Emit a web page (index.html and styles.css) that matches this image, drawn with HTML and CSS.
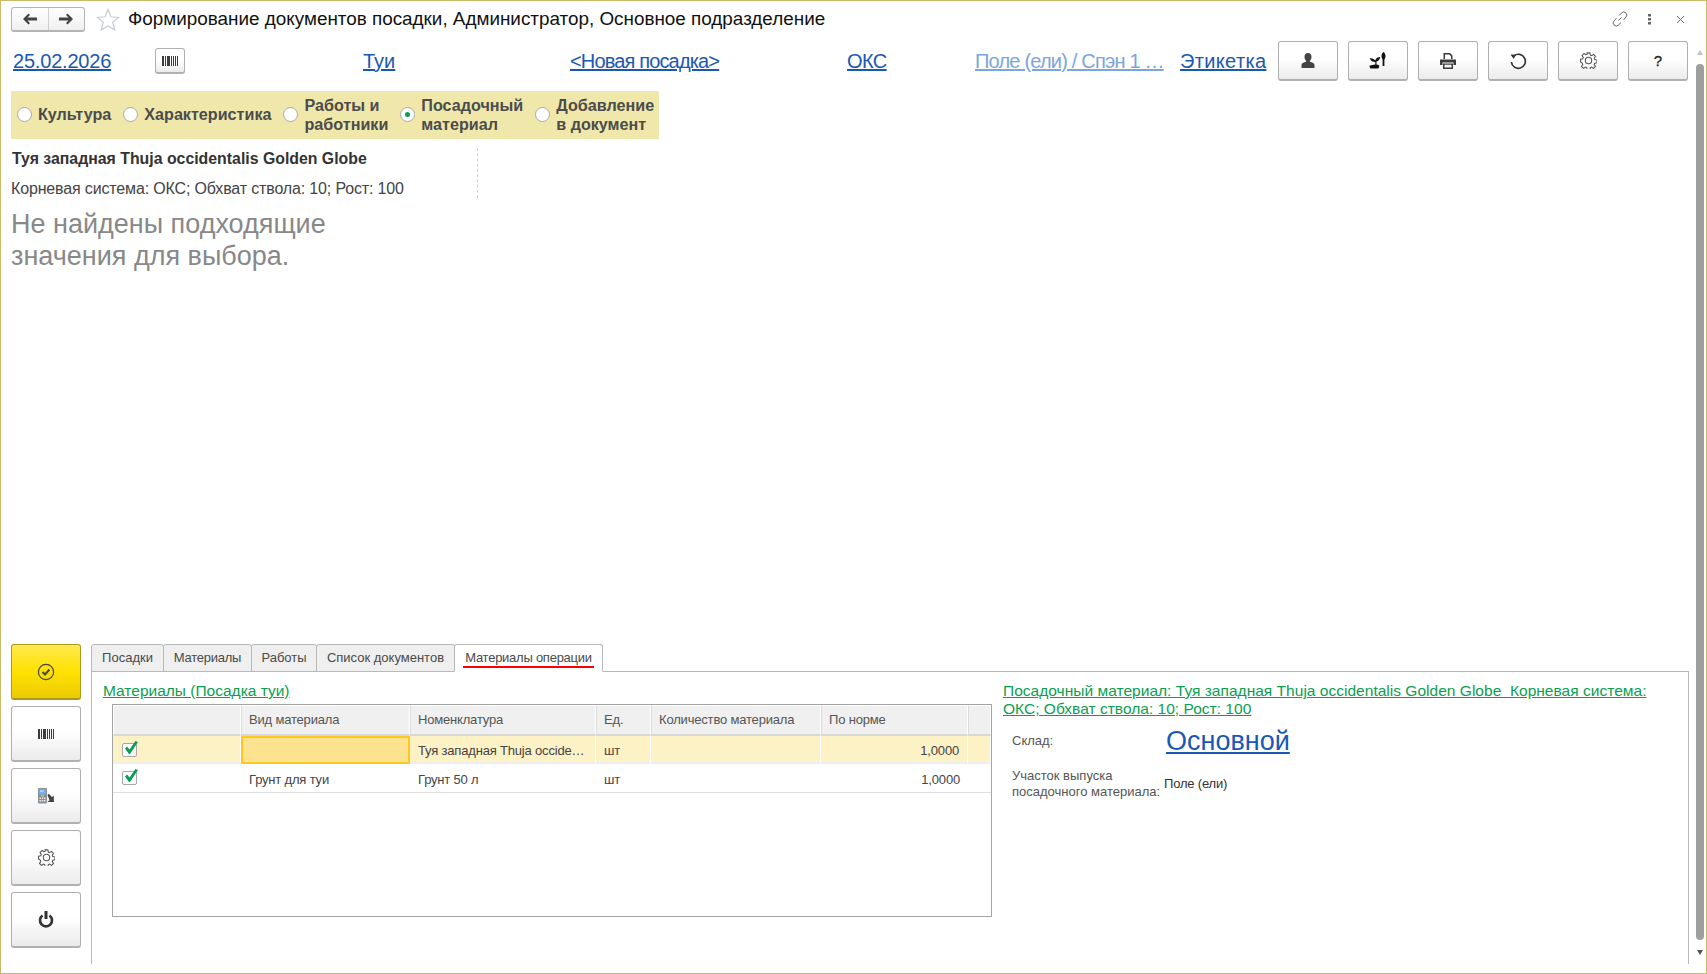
FILE: index.html
```html
<!DOCTYPE html>
<html lang="ru">
<head>
<meta charset="utf-8">
<title>Формирование документов посадки</title>
<link rel="stylesheet" href="styles.css">
</head>
<body>
<svg class="sprite" aria-hidden="true">
  <symbol id="gear" viewBox="0 0 16 16">
    <path fill="none" stroke="currentColor" stroke-width="1" d="M6.700.8h2.600l.4 2.100 1.200.5 1.800-1.200 1.900 1.900-1.200 1.800.5 1.200 2.100.4v2.600l-2.100.4-.5 1.200 1.200 1.800-1.900 1.900-1.800-1.200-1.200.5-.4 2.100H6.700l-.4-2.100-1.200-.5-1.800 1.200-1.900-1.900 1.200-1.800-.5-1.200L.5 9.300V6.700l2.100-.4.5-1.200-1.200-1.800 1.900-1.900 1.800 1.200 1.200-.5z"/>
    <circle cx="8" cy="8" r="3" fill="none" stroke="currentColor" stroke-width="1"/>
  </symbol>
  <symbol id="barcode" viewBox="0 0 16 10">
    <path fill="currentColor" d="M0 0h2v10H0zM3 0h1v10H3zM5 0h3v10H5zM9 0h1v10H9zM11 0h1v10h-1zM13 0h1v10h-1zM15 0h1v10h-1z"/>
  </symbol>
  <symbol id="check" viewBox="0 0 16 16">
    <rect x=".5" y="2.500" width="14" height="13" rx="1.500" fill="#fff" stroke="#a8a8a8"/>
    <path fill="#0d9c55" d="M3 7.500l2-2 2.600 3L13.400 0 16 1 8 13H7z"/>
  </symbol>
</svg>

<div class="window">
  <header class="titlebar">
    <div class="nav">
      <button class="nav-btn" type="button" aria-label="Назад">
        <svg width="16" height="12" viewBox="0 0 16 12"><path fill="#444" d="M6.500.5 8 2 5.500 4.500H15v3H5.500L8 10l-1.500 1.500L1 6z"/></svg>
      </button>
      <button class="nav-btn" type="button" aria-label="Вперёд">
        <svg width="16" height="12" viewBox="0 0 16 12"><path fill="#444" d="M9.500.5 8 2l2.500 2.500H1v3h9.500L8 10l1.500 1.500L15 6z"/></svg>
      </button>
    </div>
    <svg class="star" width="24" height="23" viewBox="0 0 24 23"><path fill="#fff" stroke="#c5ccd6" stroke-width="1.200" d="M12 1.500l3 7.300 7.700.6-5.900 5 1.900 7.600L12 17.900 5.300 22l1.900-7.600-5.900-5 7.700-.6z"/></svg>
    <h1 class="title">Формирование документов посадки, Администратор, Основное подразделение</h1>
    <div class="win-tools">
      <svg width="16" height="16" viewBox="0 0 16 16"><g fill="none" stroke="#666" stroke-width="1"><path d="M6.500 9.500l3-3M7 4.500l2.600-2.600a3 3 0 0 1 4.300 4.300L11.500 8.800M9 11.500l-2.600 2.600a3 3 0 0 1-4.300-4.300L4.500 7.200"/></g></svg>
      <svg width="4" height="11" viewBox="0 0 4 11"><path fill="#666" d="M0 0h3v2.500H0zM0 4h3v2.500H0zM0 8h3v2.500H0z"/></svg>
      <svg width="9" height="9" viewBox="0 0 9 9"><path fill="none" stroke="#666" stroke-width="1" d="M1 1l7 7M8 1L1 8"/></svg>
    </div>
  </header>

  <div class="toprow">
    <a class="link ls-date" href="#">25.02.2026</a>
    <button class="btn btn-small" type="button" aria-label="Штрихкод"><svg class="ic" width="16" height="10"><use href="#barcode"/></svg></button>
    <a class="link" href="#">Туи</a>
    <a class="link ls-new" href="#">&lt;Новая посадка&gt;</a>
    <a class="link ls-oks" href="#">ОКС</a>
    <a class="link link-pale" href="#">Поле (ели) / Спэн 1 …</a>
    <a class="link ls-label" href="#">Этикетка</a>
    <div class="tools">
      <button class="btn btn-tool" type="button" aria-label="Работник">
        <svg width="14" height="15" viewBox="0 0 14 15"><path fill="#444" d="M7 0c2.200 0 3.500 1.700 3.500 3.900 0 1.600-.7 3-1.600 3.800v1.100c2.300.6 4.600 1.500 4.600 3.300V15H.5v-2.900c0-1.800 2.300-2.700 4.600-3.300V7.700C4.200 6.900 3.500 5.500 3.500 3.900 3.500 1.700 4.800 0 7 0z"/></svg>
      </button>
      <button class="btn btn-tool" type="button" aria-label="Посадка">
        <svg width="18" height="17" viewBox="0 0 18 17"><path fill="#111" d="M14.500 0c1.300 1 2 2.500 2 4.200 0 1.500-.7 2.700-1.100 3.200V14h-1.800V7.400c-.4-.5-1.100-1.700-1.100-3.200 0-1.700.7-3.200 2-4.200zM6.300 12.500V10C4 9.900 1.400 9 .8 6.200 3.300 6 5.400 6.900 6.300 8.600c.5-2.100 2.200-3.500 4.900-3.500-.3 2.600-1.900 4.100-3.700 4.400v3c.8.100 1.800.5 2.700 1v1.200l-.9 1.800H1.500L.5 14.700v-1c1.600-.6 3.600-1.100 5.800-1.200z"/></svg>
      </button>
      <button class="btn btn-tool" type="button" aria-label="Печать">
        <svg width="16" height="16" viewBox="0 0 16 16"><path fill="#3c3c3c" d="M3.500 0H10l2.500 2.500V6H11V3.300L9.300 1.500H5V6H3.500zM0 6.500h16V12h-2.500V9.500h-11V12H0zM13 7.500h1.500v1H13zM3 10.500h10V16H3zm1.500 1.300v2.700h7v-2.700z"/></svg>
      </button>
      <button class="btn btn-tool" type="button" aria-label="Обновить">
        <svg width="18" height="18" viewBox="0 0 18 18"><path fill="none" stroke="#333" stroke-width="1.700" d="M5 3.800A7 7 0 1 1 2.400 10"/><path fill="#333" d="M1.500 2.500l5.500.2-2.300 4.300z"/></svg>
      </button>
      <button class="btn btn-tool" type="button" aria-label="Настройки"><svg class="ic-gear" width="17" height="17"><use href="#gear"/></svg></button>
      <button class="btn btn-tool btn-help" type="button">?</button>
    </div>
  </div>

  <div class="steps">
    <label class="step"><span class="radio"></span><span class="step-text">Культура</span></label>
    <label class="step"><span class="radio"></span><span class="step-text">Характеристика</span></label>
    <label class="step"><span class="radio"></span><span class="step-text">Работы и<br>работники</span></label>
    <label class="step"><span class="radio radio-on"></span><span class="step-text">Посадочный<br>материал</span></label>
    <label class="step"><span class="radio"></span><span class="step-text">Добавление<br>в документ</span></label>
  </div>

  <main class="choice">
    <div class="choice-info">
      <div class="choice-name">Туя западная Thuja occidentalis Golden Globe</div>
      <div class="choice-props">Корневая система: ОКС; Обхват ствола: 10; Рост: 100</div>
    </div>
    <p class="choice-empty">Не найдены подходящие<br>значения для выбора.</p>
  </main>

  <section class="bottom">
    <aside class="side">
      <button class="btn btn-side btn-yellow" type="button" aria-label="Готово">
        <svg width="18" height="18" viewBox="0 0 18 18"><circle cx="9" cy="9" r="7.600" fill="none" stroke="#444" stroke-width="1.200"/><path fill="none" stroke="#444" stroke-width="2" d="M5.500 9l2.500 2.500 4.500-5"/></svg>
      </button>
      <button class="btn btn-side" type="button" aria-label="Штрихкод"><svg class="ic" width="16" height="10"><use href="#barcode"/></svg></button>
      <button class="btn btn-side" type="button" aria-label="Терминал">
        <svg width="17" height="16" viewBox="0 0 17 16"><rect x="0" y="0" width="9" height="15.500" rx="1" fill="#8a9097"/><rect x="1.200" y="1.200" width="6.600" height="5.300" fill="#6bb6ee"/><rect x="2" y="2.500" width="3.500" height="1" fill="#d8effc"/><rect x="3" y="7" width="3" height="1.500" fill="#f2c100"/><path fill="#e6e6e6" d="M1.500 9.500H3V11H1.500zM3.800 9.500h1.500V11H3.800zM6 9.500h1.500V11H6zM1.500 12H3v1.500H1.500zM3.800 12h1.500v1.500H3.800zM6 12h1.500v1.500H6z"/><path fill="#444" d="M9.500 7l1.200-1.200 3.300 3.300 1.700-1.700.3 6.600H9.500l2-1.700z"/></svg>
      </button>
      <button class="btn btn-side" type="button" aria-label="Настройки"><svg class="ic-gear" width="17" height="17"><use href="#gear"/></svg></button>
      <button class="btn btn-side" type="button" aria-label="Выключить">
        <svg width="16" height="17" viewBox="0 0 16 17"><path fill="none" stroke="#333" stroke-width="2.600" d="M4.500 4.500a6 6 0 1 0 7 0"/><path fill="#333" d="M6.500 0h3v8h-3z"/></svg>
      </button>
    </aside>

    <div class="tabbox">
      <nav class="tabs">
        <span class="tab tab-1">Посадки</span>
        <span class="tab tab-2 tab-tight">Материалы</span>
        <span class="tab tab-3">Работы</span>
        <span class="tab tab-4">Список документов</span>
        <span class="tab tab-5 tab-active tab-tight"><span class="tab-mark">Материалы операции</span></span>
      </nav>
      <div class="panel">
        <div class="panel-left">
          <a class="green" href="#">Материалы (Посадка туи)</a>
          <div class="grid-box">
            <table class="grid">
              <colgroup>
                <col class="c1"><col class="c2"><col class="c3"><col class="c4"><col class="c5"><col class="c6"><col class="c7">
              </colgroup>
              <thead>
                <tr><th></th><th>Вид материала</th><th>Номенклатура</th><th>Ед.</th><th>Количество материала</th><th>По норме</th><th></th></tr>
              </thead>
              <tbody>
                <tr class="row-current">
                  <td class="cell-check"><svg width="16" height="16"><use href="#check"/></svg></td>
                  <td class="cell-focus"></td>
                  <td class="cell-cut">Туя западная Thuja occidentalis Golden Globe</td>
                  <td>шт</td><td></td><td class="num">1,0000</td><td></td>
                </tr>
                <tr class="row-plain">
                  <td class="cell-check"><svg width="16" height="16"><use href="#check"/></svg></td>
                  <td>Грунт для туи</td>
                  <td>Грунт 50 л</td>
                  <td>шт</td><td></td><td class="num">1,0000</td><td></td>
                </tr>
              </tbody>
            </table>
          </div>
        </div>
        <div class="panel-right">
          <a class="green green-long" href="#">Посадочный материал: Туя западная Thuja occidentalis Golden Globe&nbsp; Корневая система: ОКС; Обхват ствола: 10; Рост: 100</a>
          <div class="form">
            <span class="form-label">Склад:</span>
            <a class="link link-big" href="#">Основной</a>
            <span class="form-label">Участок выпуска<br>посадочного материала:</span>
            <span class="form-value">Поле (ели)</span>
          </div>
        </div>
      </div>
    </div>
  </section>

  <div class="scrollbar">
    <span class="arrow-up"></span>
    <span class="thumb"></span>
    <span class="arrow-down"></span>
  </div>
</div>
</body>
</html>
```

FILE: styles.css
```css
* { box-sizing: border-box; }
html, body { margin: 0; padding: 0; height: 100%; background: #fff; overflow: hidden; }
body { font-family: "Liberation Sans", Arial, sans-serif; color: #333; }
.sprite { display: none; }

.window {
  position: relative;
  width: 1707px;
  height: 974px;
  border: 1px solid #cbbb68;
  border-bottom-color: #bdbb78;
  display: flex;
  flex-direction: column;
}

/* title bar */
.titlebar { height: 40px; flex: none; display: flex; align-items: flex-start; padding: 6px 0 0 10px; }
.nav {
  display: flex; width: 74px; height: 25px;
  border: 1px solid #b4b4b4; border-bottom-width: 2px; border-radius: 3px;
  background: linear-gradient(#fff, #f0f0f0);
}
.nav-btn { flex: 1; padding: 0; border: 0; background: none; display: flex; align-items: center; justify-content: center; }
.nav-btn + .nav-btn { border-left: 1px solid #d0d0d0; }
.star { margin: 1px 0 0 11px; flex: none; }
.title { margin: 0 0 0 8px; font-size: 18.870px; line-height: 24px; font-weight: 400; color: #111; }
.win-tools { margin-left: auto; display: flex; align-items: center; padding-right: 21px; height: 24px; }
.win-tools svg:nth-child(1) { margin-right: 20px; }
.win-tools svg:nth-child(2) { margin-right: 24px; }

/* top row */
.toprow {
  height: 40px; flex: none; display: grid; align-items: center; padding-left: 12px;
  grid-template-columns: 142px 208px 207px 277px 128px 205px 98px auto;
}
.link { color: #1b57b5; font-size: 20px; line-height: 24px; text-decoration: underline; justify-self: start; white-space: nowrap; }
.link-pale { color: #7ba5dd; letter-spacing: -.8px; }
.ls-date { letter-spacing: -.2px; }
.ls-new { letter-spacing: -.85px; }
.ls-oks { letter-spacing: -.6px; }
.ls-label { letter-spacing: .35px; }
.btn {
  padding: 0; display: flex; align-items: center; justify-content: center;
  border: 1px solid #b0b0b0; border-bottom-width: 2px; border-radius: 3px;
  background: linear-gradient(#fff 45%, #ebebeb);
  color: #3c3c3c;
}
.btn-small { width: 30px; height: 26px; }
.tools { display: flex; gap: 10px; }
.btn-tool { width: 60px; height: 40px; }
.btn-help { font: 400 15px "Liberation Sans", Arial, sans-serif; color: #222; -webkit-text-stroke: .3px #222; }
.ic { color: #3c3c3c; }
.ic-gear { color: #555; }

/* step band */
.steps {
  flex: none; align-self: flex-start; margin: 10px 0 0 10px; height: 48px; width: 648px;
  background: #efe8aa; display: flex; align-items: center; padding: 0 0 1px 6px;
  font-size: 16.150px; font-weight: 700; line-height: 19px; color: #4c4c4c;
}
.step { display: flex; align-items: center; margin-right: 12px; }
.step-text { margin-left: 6px; }
.radio {
  width: 15px; height: 15px; flex: none; border-radius: 50%; position: relative;
  background: #fff; border: 1px solid #a9a9a9;
}
.radio-on::after {
  content: ""; position: absolute; left: 4px; top: 4px; width: 5px; height: 5px;
  border-radius: 50%; background: #0d9c55;
}

/* selection area */
.choice { flex: 1; padding: 9px 0 0 10px; min-height: 0; }
.choice-info { width: 467px; height: 50px; border-right: 1px dashed #d0d0d0; padding-top: 1px; }
.choice-name { padding-left: 1px; font-size: 15.850px; line-height: 20px; font-weight: 700; color: #333; }
.choice-props { margin-top: 10px; font-size: 16px; line-height: 20px; letter-spacing: -.15px; color: #444; }
.choice-empty { margin: 10px 0 0; font-size: 27px; line-height: 32px; color: #888; }

/* bottom block */
.bottom { flex: none; height: 329px; display: flex; padding-left: 10px; }
.side { width: 70px; flex: none; display: flex; flex-direction: column; gap: 6px; }
.btn-side { width: 70px; height: 56px; }
.btn-yellow { background: linear-gradient(#ffe94f, #ffe100 50%, #edcb00); border-color: #ab9a1e; }

.tabbox { margin-left: 10px; width: 1598px; height: 320px; display: flex; flex-direction: column; }
.tabs { display: flex; height: 28px; flex: none; font-size: 13px; color: #4a4a4a; }
.tab {
  height: 28px; display: flex; align-items: center; justify-content: center;
  background: #efefef; border: 1px solid #b8b8b8;
  border-radius: 3px 3px 0 0; margin-right: -1px; padding-bottom: 1px;
}
.tab-tight { letter-spacing: -.25px; }
.tab-1 { width: 73px; }
.tab-2 { width: 89px; }
.tab-3 { width: 66px; }
.tab-4 { width: 139px; }
.tab-5 { width: 149px; }
.tab-active { background: #fff; border-bottom-color: #fff; position: relative; z-index: 1; }
.tab-mark { display: block; border-bottom: 2.500px solid #ff0000; padding: 0 2px; line-height: 17px; margin-top: 2px; }

.panel {
  flex: 1; margin-top: -1px; border: 1px solid #b8b8b8; border-bottom: 0;
  display: flex; min-height: 0;
}
.panel-left { width: 911px; flex: none; padding: 10px 0 0 11px; }
.green { color: #0aa04f; font-size: 15.500px; line-height: 18px; text-decoration: underline; }
.panel-left .green { display: block; }
.grid-box { width: 880px; height: 213px; margin: 4px 0 0 9px; border: 1px solid #a4a4a4; }
.grid { border-collapse: separate; border-spacing: 0; table-layout: fixed; width: 878px; font-size: 13px; letter-spacing: -.18px; }
.c1 { width: 128px; } .c2 { width: 169px; } .c3 { width: 186px; } .c4 { width: 55px; }
.c5 { width: 170px; } .c6 { width: 147px; } .c7 { width: 23px; }
.grid th {
  height: 31px; padding: 0 0 1px 7px; text-align: left; font-weight: 400; color: #555;
  background: #f0f0f0; border-right: 1px solid #fff; border-left: 1px solid #dcdcdc;
  border-top: 1px solid #fff; border-bottom: 2px solid #d8d8d8;
}
.grid th:first-child { border-left: 1px solid #fff; }
.grid td {
  padding: 2px 8px 0 8px; border-bottom: 1px solid #e0e0e0; color: #444;
  white-space: nowrap; overflow: hidden;
}
.row-current td { height: 28px; background: #fdf1c6; border-right: 1px solid #fff; border-bottom: 2px solid #eee; }
.row-plain td { height: 29px; }
.grid td.cell-check { padding: 0 0 0 9px; vertical-align: top; }
.grid td.cell-check svg { display: block; margin-top: 5px; }
.grid td.cell-focus { background: #fde28f; border: 2px solid #ffc820; }
.cell-cut { text-overflow: ellipsis; }
.grid td.num { text-align: right; }

.panel-right { flex: 1; padding: 10px 0 0 0; }
.green-long { display: block; width: 660px; font-size: 15.550px; }
.form {
  margin: 7px 0 0 9px; display: grid; grid-template-columns: 152px auto; justify-content: start;
  align-items: center; row-gap: 11px; font-size: 13px; letter-spacing: -.18px;
}
.form-label { color: #555; line-height: 16px; white-space: nowrap; letter-spacing: 0; }
.form-value { color: #333; padding-bottom: 2px; }
.link-big { font-size: 27px; line-height: 32px; margin-left: 2px; letter-spacing: 0; }

/* overlay scrollbar */
.scrollbar { position: absolute; right: 2px; top: 49px; bottom: 18px; width: 8px; display: flex; flex-direction: column; align-items: center; }
.thumb { flex: 1; width: 8px; background: #9e9e9e; border-radius: 4px; margin: 9px 0 10px; }
.arrow-up { width: 0; height: 0; border: 3px solid transparent; border-top: 0; border-bottom: 5px solid #c4c4c4; }
.arrow-down { width: 0; height: 0; border: 3px solid transparent; border-bottom: 0; border-top: 5px solid #555; }
```
